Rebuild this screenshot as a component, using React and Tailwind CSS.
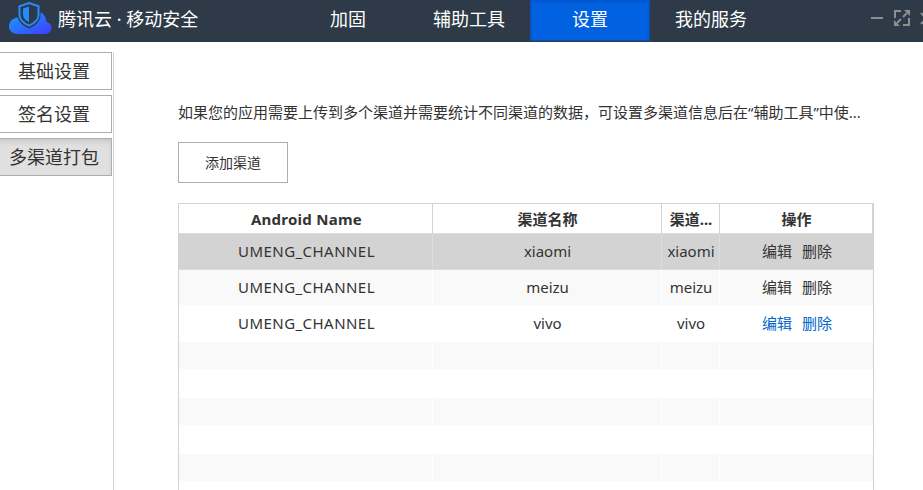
const tabs = ["加固", "辅助工具", "设置", "我的服务"];
const sections = ["基础设置", "签名设置", "多渠道打包"];
const headers = ["Android Name", "渠道名称", "渠道...", "操作"];
const channels = ["xiaomi", "meizu", "vivo"];
const columns = "grid grid-cols-[254px_229px_58px_153px]";

function Logo() {
  return (
    <svg width="46" height="36" viewBox="0 0 46 36" className="shrink-0">
      <defs>
        <linearGradient id="cloud" x1="0" y1="0" x2="1" y2="1">
          <stop offset="0" stopColor="#1f9bff" />
          <stop offset="0.5" stopColor="#2a6fff" />
          <stop offset="1" stopColor="#4438ff" />
        </linearGradient>
      </defs>
      <path d="M10 34C4.500 34 1 31 1 26.500C1 21.500 4.500 18 10 17.500L12 12.500H33C36 14 38 17 38.500 22C41.500 22.500 43.500 25 43.500 28C43.500 31.500 40.500 34 37 34Z" fill="url(#cloud)" />
      <path d="M21 0L32.500 4.500V15C32.500 21 28 25.500 21 28.500C14 25.500 9.500 21 9.500 15V4.500Z" fill="#2e3a48" />
      <path d="M21 3L30.500 6.300V15C30.500 19.500 27 23 21 25.700C15 23 11.500 19.500 11.500 15V6.300Z" fill="none" stroke="#258cff" strokeWidth="2" />
      <path d="M21 6.500V22C17 20 15 17.500 15 14.500V8.500Z" fill="#258cff" />
    </svg>
  );
}

function WindowControls() {
  return (
    <svg width="55" height="42" viewBox="868 0 55 42" fill="none" stroke="#8e8e8e" strokeWidth="2" className="ml-auto shrink-0">
      <path d="M871 18H883" />
      <path d="M901 11H895V18M903 25H909V18M897 23L901 19M903 17L907 13" />
      <path d="M904 10H910V16ZM894 20V26H900Z" fill="#8e8e8e" stroke="none" />
      <path d="M921 13L932 24M932 13L921 24" />
    </svg>
  );
}

export default function App() {
  return (
    <div className="flex h-[490px] w-[923px] flex-col overflow-hidden bg-white font-['Noto_Sans','Noto_Sans_CJK_SC',sans-serif] text-[15px] text-[#333]">
      <header className="flex h-[42px] shrink-0 items-start bg-[#2e3a48] text-[18px] text-white">
        <div className="flex w-[288px] shrink-0 pl-2">
          <Logo />
          <span className="ml-1 h-[38px] whitespace-nowrap leading-[38px]">腾讯云 · 移动安全</span>
        </div>
        <nav className="flex gap-px">
          {tabs.map((tab) => (
            <button
              key={tab}
              className={
                tab === "设置"
                  ? "h-[41px] w-[120px] border-x border-b border-[#0b50b0] bg-[#0061e1] pb-[3px] leading-[36px] shadow-[inset_0_2px_3px_#0055cc]"
                  : "h-[41px] w-[120px] pb-[4px] leading-[36px]"
              }
            >
              {tab}
            </button>
          ))}
        </nav>
        <WindowControls />
      </header>

      <div className="flex min-h-0 flex-1 pt-[10px]">
        <aside className="flex w-[114px] shrink-0 flex-col gap-[5px] border-r border-[#d3d3d3]">
          {sections.map((s, i) => (
            <button
              key={s}
              className={
                i === 2
                  ? "-ml-1 h-[38px] w-[116px] border border-[#adadad] bg-[#e0e0e0] text-[18px] leading-[36px] shadow-[inset_0_4px_5px_-1px_#cacaca]"
                  : "-ml-1 h-[38px] w-[116px] border border-[#adadad] bg-white text-[18px] leading-[36px]"
              }
            >
              {s}
            </button>
          ))}
        </aside>

        <main className="flex flex-col items-start pl-16 pt-[49px]">
          <p className="h-[22px] whitespace-nowrap leading-[22px]">
            如果您的应用需要上传到多个渠道并需要统计不同渠道的数据，可设置多渠道信息后在“辅助工具”中使...
          </p>
          <button className="mt-[19px] h-[41px] w-[110px] shrink-0 border border-[#adadad] text-[14px]">添加渠道</button>

          <div className="mt-5 flex h-[300px] w-[696px] shrink-0 flex-col border border-[#d3d3d3]">
            <div className={`${columns} h-[30px] shrink-0 border-b border-[#dcdcdc] text-center font-bold leading-[30px]`}>
              {headers.map((h, i) => (
                <div key={h} className={i === 0 ? "border-r border-[#d3d3d3] pl-[2px] tracking-[0.25px]" : "border-r border-[#d3d3d3] pl-px"}>
                  {h}
                </div>
              ))}
            </div>
            {channels.map((name, i) => {
              const cell =
                i === 0
                  ? "border-b border-r border-[#dcdcdc] bg-[#d3d3d3] pl-px last:border-r-0"
                  : i === 1
                    ? "border-b border-r border-white bg-[#f9f9f9] pl-px last:border-r-0"
                    : "border-b border-r border-white bg-white pl-px last:border-r-0";
              return (
                <div key={name} className={`${columns} h-9 shrink-0 text-center leading-[34px]`}>
                  <div className={cell}>
                    <span className="ml-px tracking-[0.45px]">UMENG_CHANNEL</span>
                  </div>
                  <div className={cell}>{name}</div>
                  <div className={cell}>{name}</div>
                  <div className={cell}>
                    <div className={i === 2 ? "flex justify-center gap-[10px] text-[#0066cc]" : "flex justify-center gap-[10px]"}>
                      <a>编辑</a>
                      <a>删除</a>
                    </div>
                  </div>
                </div>
              );
            })}
            {[0, 1, 2, 3, 4, 5].map((r) => (
              <div key={r} className={`${columns} h-7 shrink-0`}>
                {headers.map((h) => (
                  <div
                    key={h}
                    className={
                      r % 2 === 0
                        ? "border-b border-r border-white bg-[#f9f9f9] last:border-r-0"
                        : "border-b border-r border-white bg-white last:border-r-0"
                    }
                  />
                ))}
              </div>
            ))}
          </div>
        </main>
      </div>
    </div>
  );
}
